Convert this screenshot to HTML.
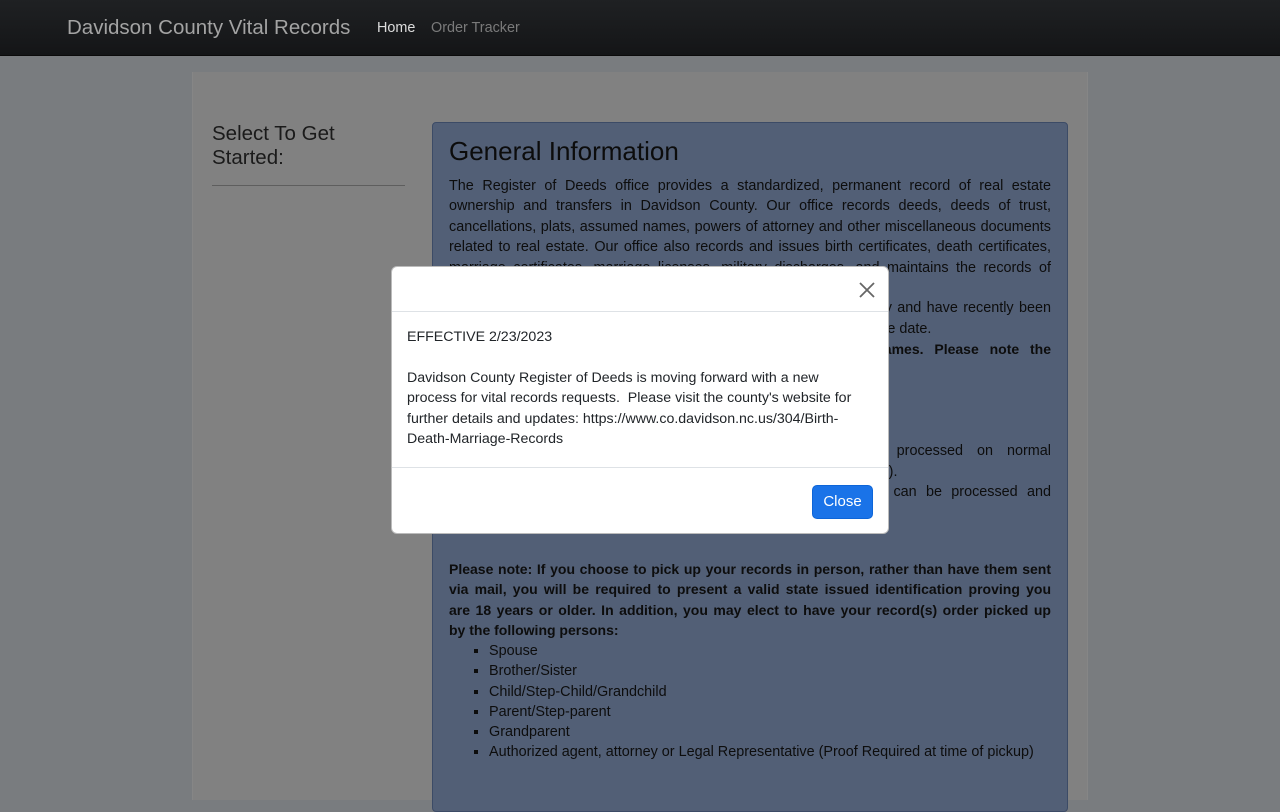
<!DOCTYPE html>
<html><head><meta charset="utf-8"><style>
*{box-sizing:border-box;margin:0;padding:0}
body{width:1280px;height:800px;overflow:hidden;background:#797c7f;font-family:"Liberation Sans",sans-serif;font-size:14.4px;color:#0d0d0d;position:relative}
.nav{position:absolute;left:0;top:0;width:1280px;height:56px;background:linear-gradient(#1f2123,#141517);border-bottom:1px solid #0b0b0b}
.brand{position:absolute;left:67px;top:16px;font-size:20.5px;color:#a3a3a3}
.nl{position:absolute;top:20px;font-size:14.4px}
.cont{position:absolute;left:192px;top:72px;width:896px;height:728px;background:#818181;border-left:1px solid #868686;border-right:1px solid #868686}
.sel{position:absolute;left:212px;top:122px;font-size:20.5px;line-height:24px;color:#1a1a1a}
.hr{position:absolute;left:212px;top:185px;width:193px;height:1px;background:#5e5e5e}
.panel{position:absolute;left:432px;top:122px;width:636px;height:690px;background:#525f76;border:1px solid #3c4b66;border-radius:4px}
.h{position:absolute;left:449px;top:136px;font-size:26px;color:#0c0c0c}
.txt{position:absolute;left:449px;width:602px;line-height:20.4px}
.j{text-align:justify;text-align-last:justify;white-space:nowrap;overflow:hidden}
.b{font-weight:bold;font-size:14px}
ul{list-style:square;position:absolute;left:489px;top:641px;line-height:20.3px}
.modal{position:absolute;left:391px;top:266px;width:498px;height:268px;background:#fff;border-radius:6px;border:1px solid #bbb}
.mh{height:45px;border-bottom:1px solid #dee2e6}
.mb{padding:15px 15px;line-height:20.4px;color:#212529;white-space:nowrap;font-size:14.2px}
.mf{position:absolute;left:0;top:200px;width:496px;border-top:1px solid #dee2e6;height:66px}
.btn{position:absolute;left:420px;top:17px;width:61px;height:34px;background:#1a73e8;border:1px solid #0d65d8;border-radius:5px;color:#fff;font-size:15px;text-align:center;line-height:32px}
</style></head><body>
<div class="nav">
<div class="brand">Davidson County Vital Records</div>
<div class="nl" style="left:377px;color:#dcdcdc">Home</div>
<div class="nl" style="left:431px;color:#7a7a7a">Order Tracker</div>
</div>
<div class="cont"></div>
<div class="sel">Select To Get<br>Started:</div>
<div class="hr"></div>
<div class="panel"></div>
<div class="h">General Information</div>
<div class="txt" style="top:176px">
<div class="j">The Register of Deeds office provides a standardized, permanent record of real estate</div>
<div class="j">ownership and transfers in Davidson County. Our office records deeds, deeds of trust,</div>
<div class="j">cancellations, plats, assumed names, powers of attorney and other miscellaneous documents</div>
<div class="j">related to real estate. Our office also records and issues birth certificates, death certificates,</div>
<div class="j">marriage certificates, marriage licenses, military discharges, and maintains the records of</div>
<div>notary public commissions.</div>
<div class="j">Vital records are available for births and deaths in Davidson County and have recently been</div>
<div>made available online for marriages from 1868 to the current marriage date.</div>
<div class="j b">Birth records are available for search by both parents' names. Please note the</div>
<div class="b">following:</div>
<div>&nbsp;</div>
<div>&nbsp;</div>
<div>&nbsp;</div>
<div class="j">Orders placed online for mail delivery or pickup will be processed on normal</div>
<div>business days (Monday-Friday, excluding holidays, 8:00 AM-5:00 PM).</div>
<div class="j">Please allow 24-48 hours after submitting before your request can be processed and</div>
<div>sent out.</div>
</div>
<div class="txt b" style="top:559px">
<div class="j">Please note: If you choose to pick up your records in person, rather than have them sent</div>
<div class="j">via mail, you will be required to present a valid state issued identification proving you</div>
<div class="j">are 18 years or older. In addition, you may elect to have your record(s) order picked up</div>
<div>by the following persons:</div>
</div>
<ul>
<li>Spouse</li><li>Brother/Sister</li><li>Child/Step-Child/Grandchild</li><li>Parent/Step-parent</li><li>Grandparent</li><li>Authorized agent, attorney or Legal Representative (Proof Required at time of pickup)</li>
</ul>
<div class="modal">
<div class="mh"><svg style="position:absolute;left:466px;top:14px" width="18" height="18" viewBox="0 0 18 18"><path d="M2 2L16 16M16 2L2 16" stroke="#666" stroke-width="1.8"/></svg></div>
<div class="mb">EFFECTIVE 2/23/2023<br><br>Davidson County Register of Deeds is moving forward with a new<br>process for vital records requests.&nbsp; Please visit the county's website for<br>further details and updates: https://www.co.davidson.nc.us/304/Birth-<br>Death-Marriage-Records</div>
<div class="mf"><div class="btn">Close</div></div>
</div>
</body></html>
